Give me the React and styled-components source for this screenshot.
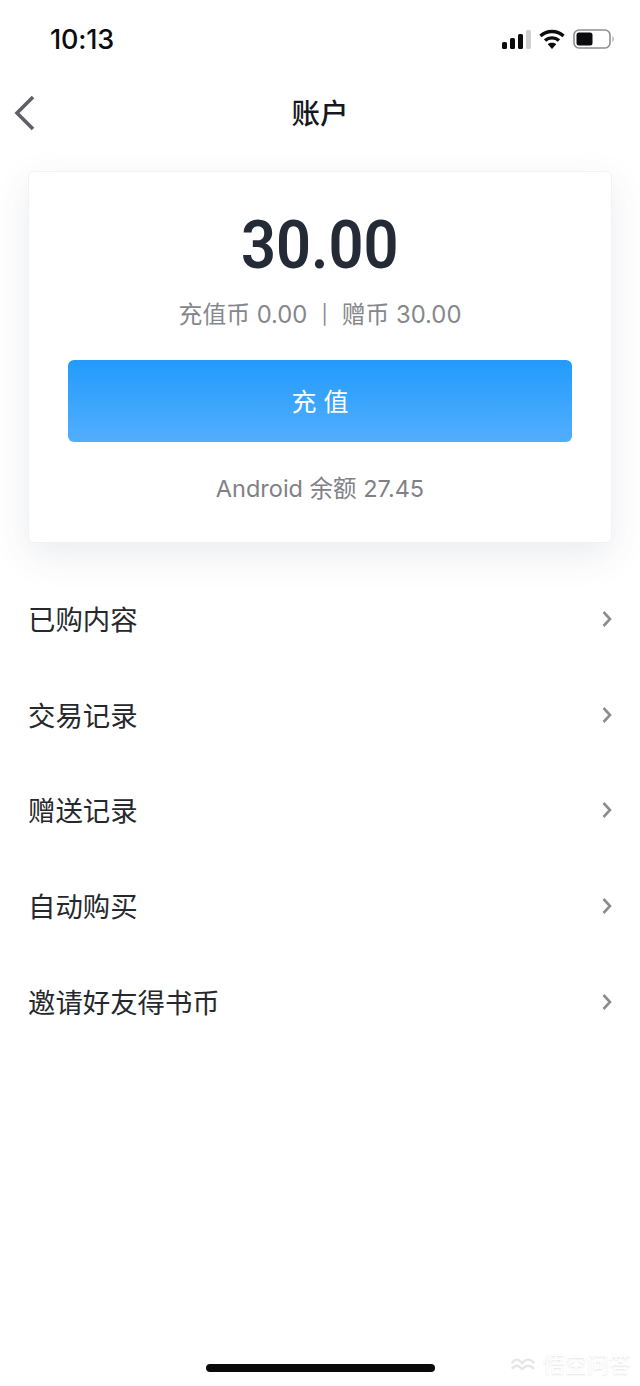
import React from 'react';
import styled, { createGlobalStyle } from 'styled-components';

const CJK = '"Inter", "Noto Sans CJK SC", sans-serif';

const GlobalStyle = createGlobalStyle`
    html, body {
        margin: 0;
        padding: 0;
        background: #fff;
    }
    body {
        font-family: ${CJK};
    }
`;

const Page = styled.div`
    position: relative;
    width: 640px;
    height: 1386px;
    overflow: hidden;
    background: #fff;
`;

const StatusBar = styled.div`
    height: 78px;
    box-sizing: border-box;
    padding: 0 25px 0 50px;
    display: flex;
    align-items: center;
    justify-content: space-between;
`;

const Time = styled.div`
    font-size: 27px;
    font-weight: 500;
    color: #0c0c0e;
    letter-spacing: -0.2px;
`;

const StatusIcons = styled.div`
    display: flex;
    align-items: center;
    gap: 8px;
`;

const NavBar = styled.div`
    position: relative;
    height: 68px;
    display: flex;
    align-items: center;
    justify-content: center;
`;

const BackButton = styled.div`
    position: absolute;
    left: 12px;
    top: 17px;
    height: 36px;
`;

const Title = styled.div`
    font-size: 28.5px;
    color: #17181c;
    font-weight: 500;
    margin-top: -2px;
`;

const Card = styled.div`
    margin: 25px 28px 0;
    height: 372px;
    box-sizing: border-box;
    background: #fff;
    border-radius: 6px;
    border: 1px solid #f1f2f5;
    box-shadow: 0 12px 36px rgba(60, 70, 100, 0.1);
    display: flex;
    flex-direction: column;
    align-items: center;
    padding: 0 39px;
`;

const Amount = styled.div`
    margin-top: 32px;
    font-family: "Roboto", sans-serif;
    font-size: 66px;
    line-height: 84px;
    font-weight: 600;
    color: #252a37;
    transform: scaleX(0.93);
`;

const Breakdown = styled.div`
    margin-top: 10px;
    font-size: 23.8px;
    line-height: 34px;
    color: #85878c;
    display: flex;
    align-items: center;
    gap: 12px;
`;

const Divider = styled.span`
    font-size: 19px;
    padding: 0 2px;
`;

const TopUp = styled.div`
    margin-top: 28px;
    width: 100%;
    height: 82px;
    border-radius: 6px;
    background: linear-gradient(180deg, #229bfc 0%, #52aefd 100%);
    color: #fff;
    font-size: 25px;
    letter-spacing: 7px;
    padding: 0 0 3px 7px;
    box-sizing: border-box;
    display: flex;
    align-items: center;
    justify-content: center;
`;

const Balance = styled.div`
    margin-top: 30px;
    font-size: 23.5px;
    line-height: 34px;
    color: #7f8186;
`;

const Menu = styled.div`
    margin-top: 28px;
    display: flex;
    flex-direction: column;
`;

const Row = styled.div`
    height: 95.6px;
    box-sizing: border-box;
    padding: 0 28px;
    display: flex;
    align-items: center;
    justify-content: space-between;
`;

const RowLabel = styled.div`
    font-size: 27.4px;
    color: #26282d;
    margin-top: -1px;
`;

const HomeBar = styled.div`
    position: absolute;
    left: 206px;
    top: 1364px;
    width: 229px;
    height: 8px;
    border-radius: 4px;
    background: #0a0a0a;
`;

const Watermark = styled.div`
    position: absolute;
    left: 510px;
    top: 1350px;
    display: flex;
    align-items: center;
    gap: 7px;
    font-size: 22px;
    line-height: 28px;
    color: #fff;
    text-shadow: 0 1px 2px rgba(0, 0, 0, 0.12);
`;

function Signal() {
    return (
        <svg width="30" height="19" viewBox="0 0 30 19">
            <rect x="1" y="12" width="5" height="7" rx="1.5" fill="#0c0c0e" />
            <rect x="9" y="8" width="5" height="11" rx="1.5" fill="#0c0c0e" />
            <rect x="17" y="4" width="5" height="15" rx="1.5" fill="#0c0c0e" />
            <rect x="25" y="0" width="5" height="19" rx="1.5" fill="#cfcfcf" />
        </svg>
    )
}

function Wifi() {
    return (
        <svg width="26" height="20" viewBox="0 0 26 20" fill="none" stroke="#0c0c0e" strokeWidth="3.4">
            <path d="M1.5 7 C8 1 18 1 24.5 7" />
            <path d="M6 11.5 C10 8 16 8 20 11.5" />
            <path d="M13 20 L8.8 15.2 C11 13.4 15 13.4 17.2 15.2 Z" fill="#0c0c0e" stroke="none" />
        </svg>
    )
}

function Battery() {
    return (
        <svg width="42" height="20" viewBox="0 0 42 20">
            <rect x="1" y="1" width="36" height="18" rx="5" fill="none" stroke="#8e8e8e" strokeWidth="1.6" />
            <rect x="3.5" y="3.5" width="16" height="13" rx="2.5" fill="#0c0c0e" />
            <path d="M39.5 7 C41 8 41 12 39.5 13 Z" fill="#9a9a9a" />
        </svg>
    )
}

function BackIcon() {
    return (
        <svg width="24" height="36" viewBox="0 0 24 36" fill="none" stroke="#5e6066" strokeWidth="3.6">
            <path d="M21 2 L5 18 L21 34" />
        </svg>
    )
}

function Chevron() {
    return (
        <svg width="10" height="16" viewBox="0 0 10 16" fill="none" stroke="#8a8c90" strokeWidth="2.6" style={{ marginTop: 1 }}>
            <path d="M1.5 1 L8 8 L1.5 15" />
        </svg>
    )
}

function WatermarkLogo() {
    return (
        <svg width="26" height="16" viewBox="0 0 32 20" fill="none" stroke="#e6e6e6" strokeWidth="3">
            <path d="M2 9 C6 3 10 3 15 9 C20 3 25 3 30 9" />
            <path d="M2 16 C6 11 10 11 15 16 C20 11 25 11 30 16" />
        </svg>
    )
}

const rows = ['已购内容', '交易记录', '赠送记录', '自动购买', '邀请好友得书币']

function App() {
    return (<>
        <GlobalStyle />
        <Page>
            <StatusBar>
                <Time>10:13</Time>
                <StatusIcons>
                    <Signal />
                    <Wifi />
                    <Battery />
                </StatusIcons>
            </StatusBar>
            <NavBar>
                <BackButton><BackIcon /></BackButton>
                <Title>账户</Title>
            </NavBar>
            <Card>
                <Amount>30.00</Amount>
                <Breakdown>
                    <span>充值币 0.00</span>
                    <Divider>|</Divider>
                    <span>赠币 30.00</span>
                </Breakdown>
                <TopUp>充值</TopUp>
                <Balance>Android 余额 27.45</Balance>
            </Card>
            <Menu>
                {rows.map(label => (
                    <Row key={label}>
                        <RowLabel>{label}</RowLabel>
                        <Chevron />
                    </Row>
                ))}
            </Menu>
            <Watermark>
                <WatermarkLogo />
                <span>悟空问答</span>
            </Watermark>
            <HomeBar />
        </Page>
    </>)
}

export default App
